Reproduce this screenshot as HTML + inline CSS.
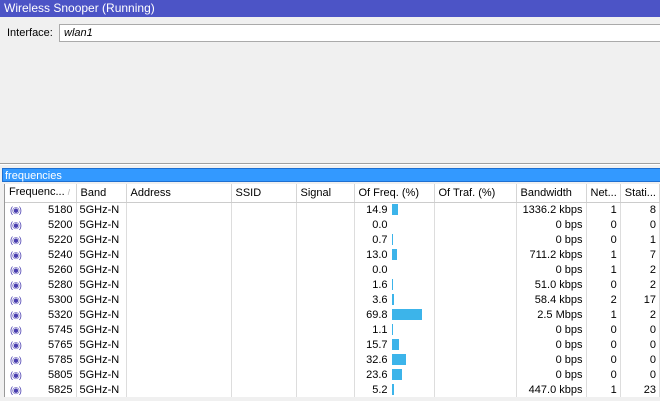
<!DOCTYPE html><html><head><style>
*{margin:0;padding:0;box-sizing:border-box}
body{width:660px;height:401px;background:#f0f0f0;font-family:"Liberation Sans",sans-serif;font-size:11px;color:#000;position:relative;overflow:hidden}
.t{position:absolute;left:0;top:0;width:660px;height:17px;background:#4c54c6;color:#fff;font-size:12px;padding:1px 4px;line-height:15px}
.lbl{position:absolute;left:7px;top:27px;font-size:11px}
.inp{position:absolute;left:59px;top:24px;width:601px;height:18px;background:#fff;border:1px solid #aaa;border-right:none;font-style:italic;padding:2px 4px}
.sep{position:absolute;left:0;top:163px;width:660px;height:2px;border-top:1px solid #a0a0a0;border-bottom:1px solid #fff}
.fb{position:absolute;left:2px;top:168px;width:658px;height:14px;background:#3399ff;color:#fff;font-size:11px;line-height:14px;padding-left:2px;border:1px solid #1f6fd0;border-right:none}
.tab{position:absolute;left:4px;top:184px;width:656px;height:213px;background:#fff;border-left:1px solid #999}
table{border-collapse:collapse;table-layout:fixed;position:absolute;left:0;top:0}
td,th{height:15px;border-right:1px solid #ddd;white-space:nowrap;overflow:hidden;font-weight:normal;padding:0 3px;line-height:14px}
th{height:18px;text-align:left;background:#fff;border-right:1px solid #d5d5d5;border-bottom:1px solid #ccc;padding-left:4px}
.r{text-align:right}
.bar{display:inline-block;height:11px;background:#3cb4ea;vertical-align:middle;margin-left:4px}
.ic{color:#4a3fb0;font-size:9px;float:left;margin-left:2px;letter-spacing:-1px}
.f{position:relative;width:4px;display:inline-block}
</style></head><body>
<div class="t">Wireless Snooper (Running)</div>
<div class="lbl">Interface:</div>
<div class="inp">wlan1</div>
<div class="sep"></div>
<div class="fb">frequencies</div>
<div class="tab"><table>
<colgroup><col style="width:71px"><col style="width:50px"><col style="width:105px"><col style="width:65px"><col style="width:58px"><col style="width:80px"><col style="width:82px"><col style="width:70px"><col style="width:33px"><col style="width:38px"></colgroup>
<tr><th>Frequenc... <span style="color:#aaa;font-size:8px">/</span></th><th>Band</th><th>Address</th><th>SSID</th><th>Signal</th><th>Of Freq. (%)</th><th>Of Traf. (%)</th><th>Bandwidth</th><th>Net...</th><th>Stati...</th></tr>
<tbody id="b">
<tr><td class="r"><span class="ic">(◉)</span>5180</td><td>5GHz-N</td><td></td><td></td><td></td><td><span style="display:inline-block;width:30px;text-align:right">14.9</span><span class="bar" style="width:6px"></span></td><td></td><td class="r">1336.2 kbps</td><td class="r">1</td><td class="r">8</td></tr>
<tr><td class="r"><span class="ic">(◉)</span>5200</td><td>5GHz-N</td><td></td><td></td><td></td><td><span style="display:inline-block;width:30px;text-align:right">0.0</span></td><td></td><td class="r">0 bps</td><td class="r">0</td><td class="r">0</td></tr>
<tr><td class="r"><span class="ic">(◉)</span>5220</td><td>5GHz-N</td><td></td><td></td><td></td><td><span style="display:inline-block;width:30px;text-align:right">0.7</span><span class="bar" style="width:1px"></span></td><td></td><td class="r">0 bps</td><td class="r">0</td><td class="r">1</td></tr>
<tr><td class="r"><span class="ic">(◉)</span>5240</td><td>5GHz-N</td><td></td><td></td><td></td><td><span style="display:inline-block;width:30px;text-align:right">13.0</span><span class="bar" style="width:5px"></span></td><td></td><td class="r">711.2 kbps</td><td class="r">1</td><td class="r">7</td></tr>
<tr><td class="r"><span class="ic">(◉)</span>5260</td><td>5GHz-N</td><td></td><td></td><td></td><td><span style="display:inline-block;width:30px;text-align:right">0.0</span></td><td></td><td class="r">0 bps</td><td class="r">1</td><td class="r">2</td></tr>
<tr><td class="r"><span class="ic">(◉)</span>5280</td><td>5GHz-N</td><td></td><td></td><td></td><td><span style="display:inline-block;width:30px;text-align:right">1.6</span><span class="bar" style="width:1px"></span></td><td></td><td class="r">51.0 kbps</td><td class="r">0</td><td class="r">2</td></tr>
<tr><td class="r"><span class="ic">(◉)</span>5300</td><td>5GHz-N</td><td></td><td></td><td></td><td><span style="display:inline-block;width:30px;text-align:right">3.6</span><span class="bar" style="width:2px"></span></td><td></td><td class="r">58.4 kbps</td><td class="r">2</td><td class="r">17</td></tr>
<tr><td class="r"><span class="ic">(◉)</span>5320</td><td>5GHz-N</td><td></td><td></td><td></td><td><span style="display:inline-block;width:30px;text-align:right">69.8</span><span class="bar" style="width:30px"></span></td><td></td><td class="r">2.5 Mbps</td><td class="r">1</td><td class="r">2</td></tr>
<tr><td class="r"><span class="ic">(◉)</span>5745</td><td>5GHz-N</td><td></td><td></td><td></td><td><span style="display:inline-block;width:30px;text-align:right">1.1</span><span class="bar" style="width:1px"></span></td><td></td><td class="r">0 bps</td><td class="r">0</td><td class="r">0</td></tr>
<tr><td class="r"><span class="ic">(◉)</span>5765</td><td>5GHz-N</td><td></td><td></td><td></td><td><span style="display:inline-block;width:30px;text-align:right">15.7</span><span class="bar" style="width:7px"></span></td><td></td><td class="r">0 bps</td><td class="r">0</td><td class="r">0</td></tr>
<tr><td class="r"><span class="ic">(◉)</span>5785</td><td>5GHz-N</td><td></td><td></td><td></td><td><span style="display:inline-block;width:30px;text-align:right">32.6</span><span class="bar" style="width:14px"></span></td><td></td><td class="r">0 bps</td><td class="r">0</td><td class="r">0</td></tr>
<tr><td class="r"><span class="ic">(◉)</span>5805</td><td>5GHz-N</td><td></td><td></td><td></td><td><span style="display:inline-block;width:30px;text-align:right">23.6</span><span class="bar" style="width:10px"></span></td><td></td><td class="r">0 bps</td><td class="r">0</td><td class="r">0</td></tr>
<tr><td class="r"><span class="ic">(◉)</span>5825</td><td>5GHz-N</td><td></td><td></td><td></td><td><span style="display:inline-block;width:30px;text-align:right">5.2</span><span class="bar" style="width:2px"></span></td><td></td><td class="r">447.0 kbps</td><td class="r">1</td><td class="r">23</td></tr>
</tbody></table></div>
</body></html>
